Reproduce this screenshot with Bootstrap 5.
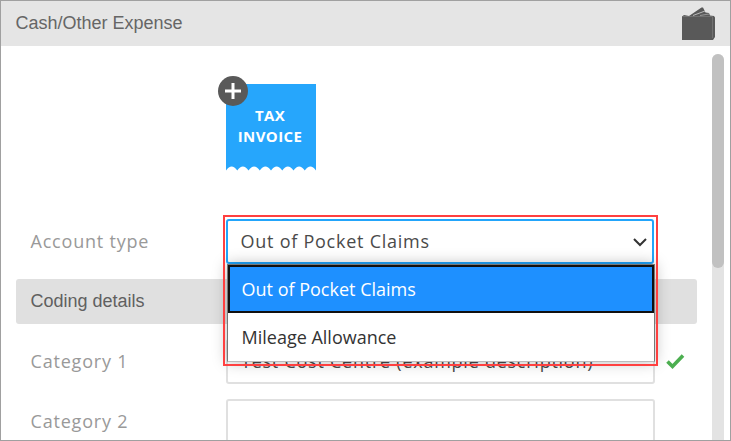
<!DOCTYPE html>
<html lang="en">
<head>
<meta charset="utf-8">
<meta name="viewport" content="width=device-width, initial-scale=1">
<title>Cash/Other Expense</title>
<link href="https://cdn.jsdelivr.net/npm/bootstrap@5.3.0/dist/css/bootstrap.min.css" rel="stylesheet">
<style>
  body { font-family: "Open Sans", "Noto Sans", sans-serif; font-size: 18px; line-height: 27px; }
  .panel { border: 1px solid #a0a0a0; height: 441px; }
  .panel-head { height: 45px; background: #e5e5e5; color: #666; font: 18px "Liberation Sans", Arial, sans-serif; padding: 0 15px 0 14.500px; }
  .expense-form { width: 681px; margin-left: 15px; padding-top: 30px; }
  .invoice { width: 98px; height: 98px; margin-left: 202px; margin-bottom: 45px; }
  .invoice-text { left: 7px; top: 29px; width: 90px; color: #fff; font-size: 15px; line-height: 21px; font-weight: 700; letter-spacing: .4px; }
  .field-row { height: 45px; margin-bottom: 15px; }
  .field-label { width: 210px; padding-left: 14.500px; color: #999; letter-spacing: .8px; }
  .field-box { width: 429px; border: 2px solid #e0e0e0; border-radius: 3px; padding-left: 13px; color: #4a4a4a; letter-spacing: .75px; background: #fff; }
  .field-box.active { width: 428px; border-color: #22a5fb; padding-left: 12.500px; }
  .section-head { height: 45px; margin-bottom: 15px; padding-left: 14.500px; background: #e0e0e0; border-radius: 3px; color: #606060; font: 18px "Liberation Sans", Arial, sans-serif; }
  .options { left: 1px; top: 45px; width: 428px; height: 98px; z-index: 3; background: #fff; border: 1px solid #777; border-bottom-color: #bbb; box-shadow: 0 0 14px rgba(0,0,0,.28); color: #333; }
  .option { height: 48px; padding-left: 13.500px; }
  .option.chosen { border: 2px solid #101010; padding-left: 11.500px; background: #1e90ff; color: #fff; }
  .callout { left: -3px; top: -4px; width: 435px; height: 151px; border: 2px solid #ff4040; z-index: 4; }
  .track { width: 12px; margin: 8px 6px 0 0; background: #e3e3e3; border-radius: 6px 6px 0 0; }
  .thumb { height: 214px; background: #c1c1c1; border-radius: 6px; }
</style>
<script src="https://cdn.jsdelivr.net/npm/bootstrap@5.3.0/dist/js/bootstrap.bundle.min.js"></script>
</head>
<body class="overflow-hidden">
<div class="panel d-flex flex-column overflow-hidden">
  <header class="panel-head d-flex align-items-center justify-content-between flex-shrink-0">
    <span>Cash/Other Expense</span>
    <svg width="33" height="33" viewBox="0 0 33 33" aria-label="Wallet">
      <path d="M7 9 19.500 .500 21 .500 23.500 5.500 27 6 28 8.500 32 9 33 10.500V30L31 33H0V9.500L2 8z" fill="#595959"/>
      <path d="M11 8.500 23 4" stroke="#bbb" stroke-width="1" fill="none"/>
      <path d="M18 8.500 27 7" stroke="#999" stroke-width="1" fill="none"/>
      <path d="M1 9.500H30.500V31" stroke="#777" stroke-width=".8" fill="none"/>
    </svg>
  </header>
  <main class="d-flex justify-content-between flex-grow-1">
    <div class="expense-form">
      <div class="invoice position-relative">
        <svg class="d-block" width="98" height="98" viewBox="0 0 98 98">
          <path d="M98 8H8V94.500q5.625 -8 11.250 0q5.625 -8 11.250 0q5.625 -8 11.250 0q5.625 -8 11.250 0q5.625 -8 11.250 0q5.625 -8 11.250 0q5.625 -8 11.250 0q5.625 -8 11.250 0z" fill="#26a6fc"/>
          <circle cx="15" cy="15" r="15" fill="#595959"/>
          <path d="M15 7V23M7 15H23" stroke="#fff" stroke-width="3"/>
        </svg>
        <div class="invoice-text position-absolute text-center">TAX<br>INVOICE</div>
      </div>
      <div class="field-row d-flex">
        <div class="field-label d-flex align-items-center">Account type</div>
        <div class="position-relative d-flex">
          <div class="field-box active d-flex align-items-center justify-content-between">
            <span>Out of Pocket Claims</span>
            <svg class="me-1" width="16" height="10" viewBox="0 0 16 10"><path d="M2 2 8 8 14 2" fill="none" stroke="#333" stroke-width="2"/></svg>
          </div>
          <div class="options position-absolute">
            <div class="option chosen d-flex align-items-center">Out of Pocket Claims</div>
            <div class="option d-flex align-items-center">Mileage Allowance</div>
          </div>
          <div class="callout position-absolute"></div>
        </div>
      </div>
      <div class="section-head d-flex align-items-center">Coding details</div>
      <div class="field-row d-flex align-items-center">
        <div class="field-label">Category 1</div>
        <div class="field-box h-100 d-flex align-items-center">Test Cost Centre (example description)</div>
        <svg class="ms-2 flex-shrink-0" width="26" height="20" viewBox="0 0 26 20"><path d="M4.500 9.500 9.500 14.500 20 3.500" fill="none" stroke="#4caf50" stroke-width="3.600"/></svg>
      </div>
      <div class="field-row d-flex align-items-center">
        <div class="field-label">Category 2</div>
        <div class="field-box h-100"></div>
      </div>
    </div>
    <div class="track flex-shrink-0"><div class="thumb"></div></div>
  </main>
</div>
</body>
</html>
